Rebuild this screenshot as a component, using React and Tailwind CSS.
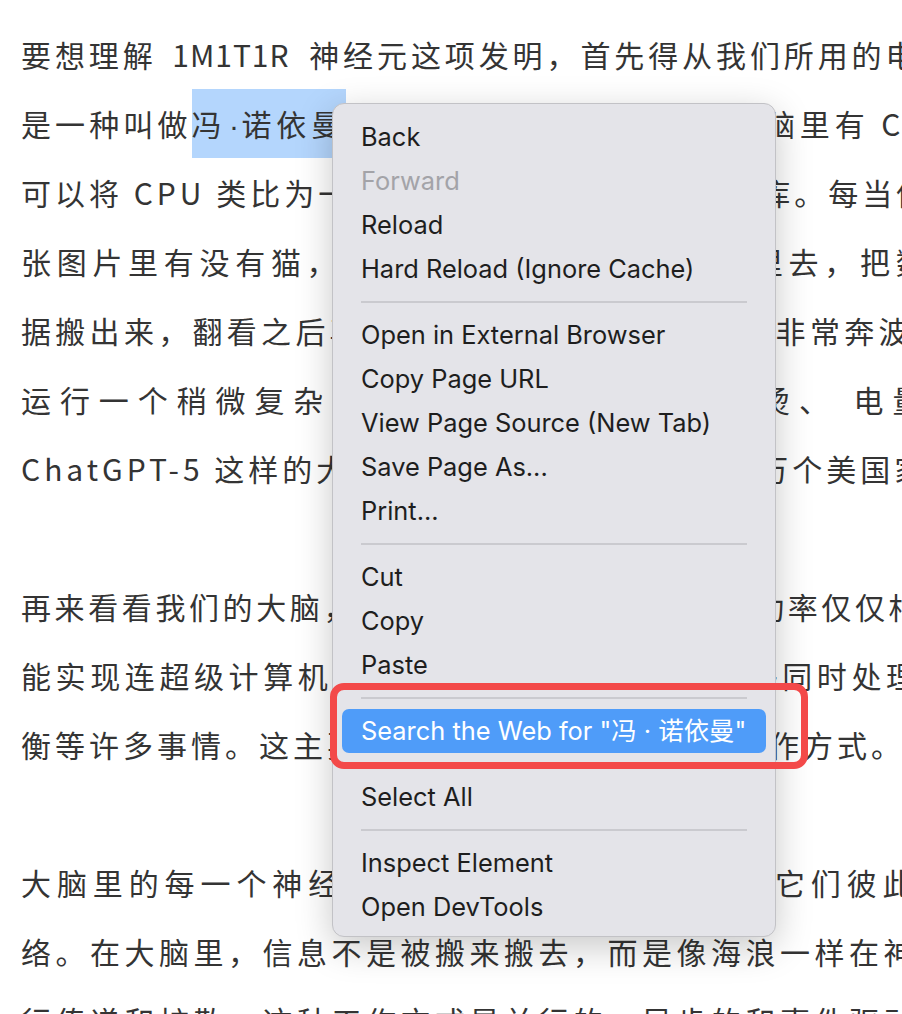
import React from "react";

// article text, one entry per rendered line (the column runs past the window edge)
const paragraphs = [
  [
    {
      ls: 3.9,
      parts: [
        "要想理解 ",
        { text: "1M1T1R", className: "pl-[5px] pr-[9px] tracking-[1px]" },
        " 神经元这项发明，首先得从我们所用的电脑说起。",
      ],
    },
    {
      ls: 4.9,
      parts: [
        { text: "是一种叫做", className: "tracking-[4.1px]" },
        {
          text: (
            <>
              冯
              <span className="inline-block w-[15px] text-center font-['Liberation_Sans',sans-serif] tracking-normal">
                ·
              </span>
              诺依曼
            </>
          ),
          className: "inline-block h-[69px] bg-[#b4d6fd]",
        },
        "计算体系结构。简单说，电脑里有 CPU 和内存。",
      ],
    },
    { ls: 4, parts: ["可以将 CPU 类比为一个工人，内存类比为一个仓库。每当他要判断一"] },
    { ls: 5.7, parts: ["张图片里有没有猫，CPU 就需要先跑到大仓库里去，把数"] },
    { ls: 4.3, parts: ["据搬出来，翻看之后再放回仓库去，这个来回过程非常奔波，"] },
    { ls: 8.9, parts: ["运行一个稍微复杂的程序，电脑就会迅速发烫、 电量"] },
    { ls: 4, parts: ["ChatGPT-5 这样的大模型，耗电量竟然相当于几万个美国家庭"] },
  ],
  [
    { ls: 3.6, parts: ["再来看看我们的大脑，它的功耗只有 20 瓦左右，功率仅仅相当于"] },
    { ls: 4.6, parts: ["能实现连超级计算机都难以完成的复杂任务，能够同时处理"] },
    { ls: 4, parts: ["衡等许多事情。这主要是得益于大脑非常独特的工作方式。"] },
  ],
  [
    { ls: 5.9, parts: ["大脑里的每一个神经元，与上万个神经元相连，它们彼此"] },
    { ls: 4.5, parts: ["络。在大脑里，信息不是被搬来搬去，而是像海浪一样在神经网"] },
    { ls: 4.5, parts: ["行传递和扩散。这种工作方式是并行的，异步的和事件驱动的。"] },
  ],
];

const menu = [
  { label: "Back" },
  { label: "Forward", disabled: true },
  { label: "Reload" },
  { label: "Hard Reload (Ignore Cache)" },
  "sep",
  { label: "Open in External Browser" },
  { label: "Copy Page URL" },
  { label: "View Page Source (New Tab)" },
  { label: "Save Page As..." },
  { label: "Print..." },
  "sep",
  { label: "Cut" },
  { label: "Copy" },
  { label: "Paste" },
  "sep",
  { label: 'Search the Web for "冯 · 诺依曼"', active: true },
  "sep",
  { label: "Select All" },
  "sep",
  { label: "Inspect Element" },
  { label: "Open DevTools" },
];

const Line = ({ line }) => (
  <div
    className="h-[69px] whitespace-pre leading-[69px]"
    style={{ letterSpacing: `${line.ls}px` }}
  >
    {line.parts.map((p, i) =>
      typeof p === "string" ? (
        <React.Fragment key={i}>{p}</React.Fragment>
      ) : (
        <span key={i} className={p.className}>
          {p.text}
        </span>
      )
    )}
  </div>
);

const Article = () => (
  <div className="flex flex-col gap-[69px] pl-[21px] pt-[20px] font-['Noto_Sans_CJK_SC',sans-serif] text-[30px] text-[#343434]">
    {paragraphs.map((p, i) => (
      <div key={i}>
        {p.map((line, j) => (
          <Line key={j} line={line} />
        ))}
      </div>
    ))}
  </div>
);

const ContextMenu = () => (
  <div className="absolute left-[332px] top-[103px] w-[444px] rounded-[12px] border border-[#c2c2c6] bg-[#e4e4e9] pb-[7px] pt-[11px] font-['Inter','Noto_Sans_CJK_SC',sans-serif] text-[25.4px] shadow-[0_10px_36px_rgba(0,0,0,0.22)]">
    {menu.map((item, i) =>
      item === "sep" ? (
        <div key={i} className="flex h-[22px] items-center px-[28px]">
          <div className="h-[2px] w-full bg-[#cacacf]" />
        </div>
      ) : (
        <div
          key={i}
          className={
            "mx-[9px] flex h-[44px] items-center rounded-[7px] px-[19px] " +
            (item.active
              ? "bg-[#4f9cf9] text-white"
              : item.disabled
              ? "text-[#a3a3a8]"
              : "text-[#1e1e1e]")
          }
        >
          {item.label}
        </div>
      )
    )}
  </div>
);

export default function App() {
  return (
    <div className="relative h-[1014px] w-[902px] overflow-hidden bg-white">
      <Article />
      <ContextMenu />
      {/* callout around the search entry */}
      <div className="pointer-events-none absolute left-[330px] top-[683px] h-[86px] w-[478px] rounded-[14px] border-[7px] border-[#f34949]" />
    </div>
  );
}
